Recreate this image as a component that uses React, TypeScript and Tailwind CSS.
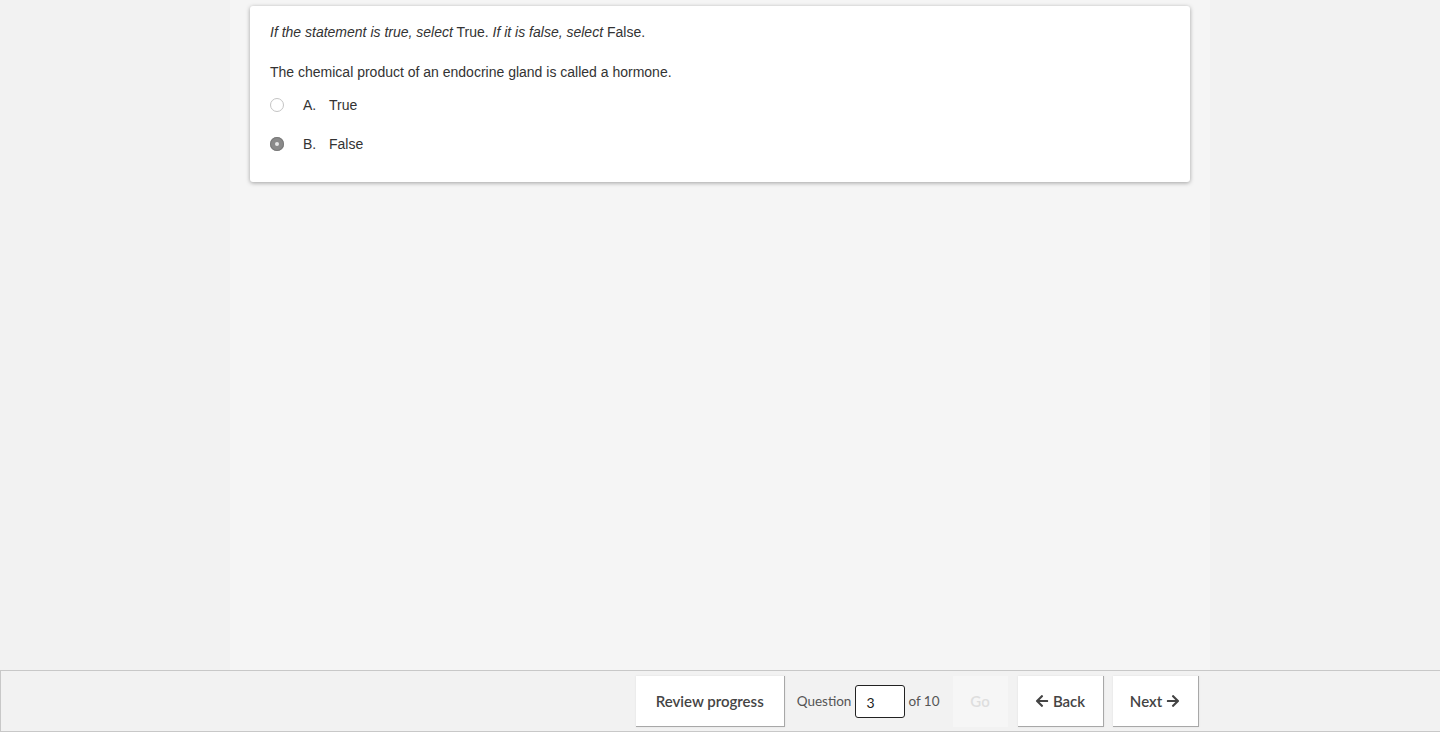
import { FaArrowLeft, FaArrowRight } from "react-icons/fa";

const options = [
  { key: "A", label: "True", selected: false },
  { key: "B", label: "False", selected: true },
];

function Radio({ selected }: { selected: boolean }) {
  if (selected) {
    return (
      <span className="flex h-[14px] w-[14px] items-center justify-center rounded-full bg-[#8a8a8a] shadow-[inset_0_0_0_1px_#7a7a7a]">
        <span className="h-[4px] w-[4px] rounded-full bg-[#e6e6e6]" />
      </span>
    );
  }
  return <span className="h-[14px] w-[14px] rounded-full border border-[#c4c4c4] bg-white" />;
}

function NavButton({ children, className = "" }: { children: React.ReactNode; className?: string }) {
  return (
    <button
      className={`flex h-[51px] items-center justify-center gap-[4px] border-r border-b border-[#a8a8a8] bg-white text-[15px] font-semibold text-[#444] shadow-[0_0_2px_rgba(0,0,0,0.08)] ${className}`}
    >
      {children}
    </button>
  );
}

export default function App() {
  return (
    <div className="flex h-[732px] flex-col bg-[#f2f2f2] font-['Liberation_Sans',Arial,sans-serif]">
      <div className="flex flex-1 justify-center">
        <div className="w-[980px] bg-[#f5f5f5] px-[20px] pt-[6px]">
          <div className="rounded-[3px] bg-white px-[20px] pt-[16px] pb-[19px] text-[14px] leading-[20px] text-[#333] shadow-[0_1px_4px_rgba(0,0,0,0.35)]">
            <p>
              <i>If the statement is true, select</i> True. <i>If it is false, select</i> False.
            </p>
            <p className="mt-[20px]">The chemical product of an endocrine gland is called a hormone.</p>
            <div className="mt-[3px] flex flex-col">
              {options.map((o) => (
                <label key={o.key} className="flex h-[39px] items-center">
                  <Radio selected={o.selected} />
                  <span className="ml-[19px] w-[26px]">{o.key}.</span>
                  <span>{o.label}</span>
                </label>
              ))}
            </div>
          </div>
        </div>
      </div>

      <div className="h-[62px] border-t border-b border-l border-[#c8c8c8] bg-[#f2f2f2] font-['Lato',sans-serif]">
        <div className="mx-auto flex w-[980px] justify-end pt-[5px] pr-[12px]">
          <NavButton className="w-[149px]">Review progress</NavButton>
          <div className="ml-[12px] flex h-[51px] items-center text-[13.5px] text-[#555]">
            <span>Question</span>
            <input
              readOnly
              value="3"
              className="ml-[4px] h-[33px] w-[50px] rounded-[3px] border border-[#222] bg-white px-[10px] pt-[2px] text-[14px] text-[#222] outline-none"
            />
            <span className="ml-[3px]">of 10</span>
          </div>
          <button className="ml-[13px] h-[51px] w-[55px] bg-[#f6f6f6] text-[15px] font-semibold text-[#dedede]">Go</button>
          <NavButton className="ml-[10px] w-[86px]">
            <FaArrowLeft className="h-[14px] w-[14px]" />
            Back
          </NavButton>
          <NavButton className="ml-[9px] w-[86px]">
            Next
            <FaArrowRight className="h-[14px] w-[14px]" />
          </NavButton>
        </div>
      </div>
    </div>
  );
}
